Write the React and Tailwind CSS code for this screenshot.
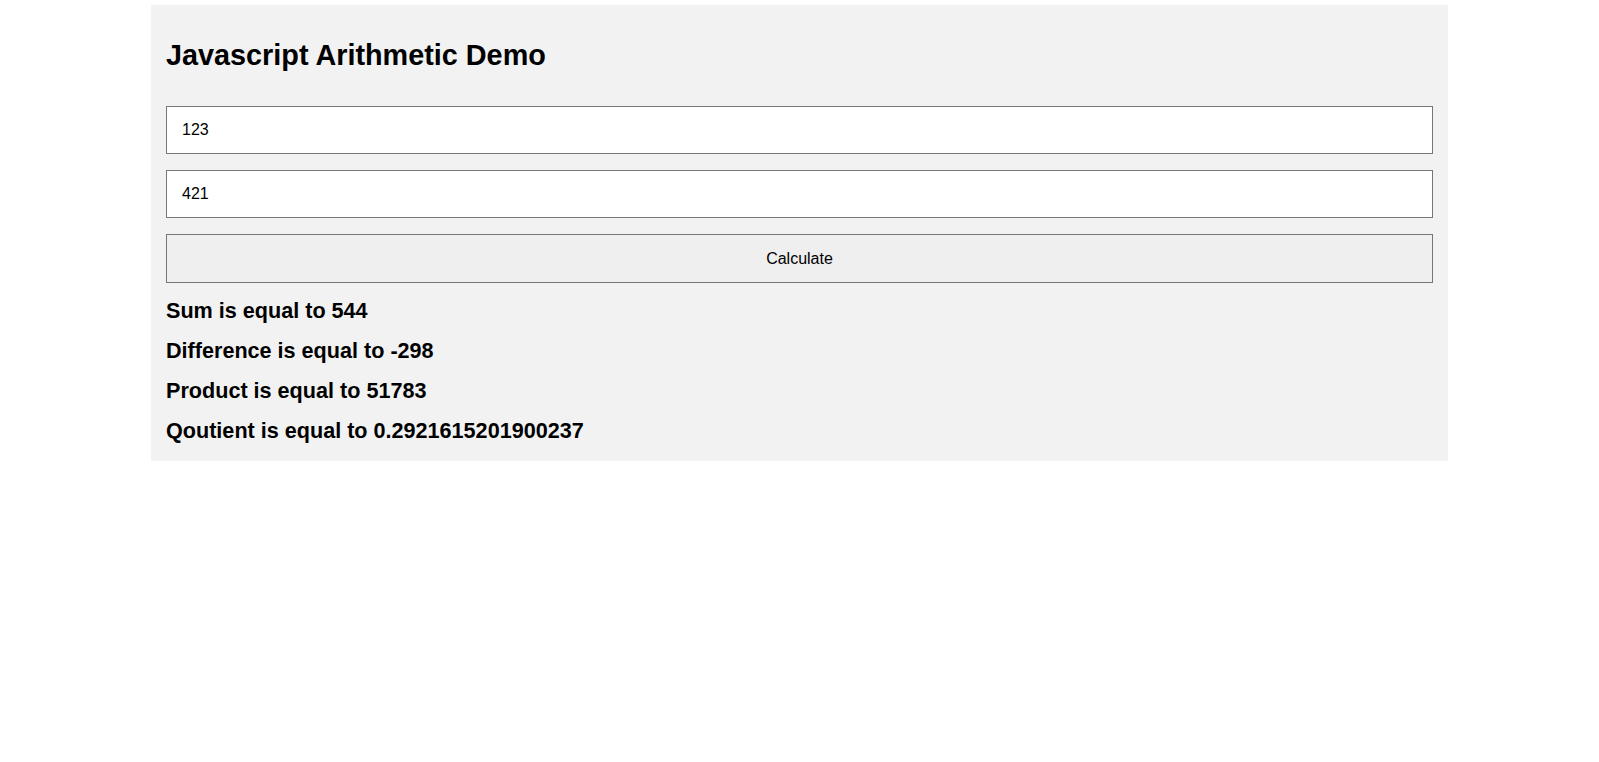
import React, { useState } from 'react';

const App = () => {
  const [a, setA] = useState('123');
  const [b, setB] = useState('421');
  const [res, setRes] = useState({ sum: 544, diff: -298, prod: 51783, quot: 0.2921615201900237 });

  const calculate = () => {
    const x = Number(a), y = Number(b);
    setRes({ sum: x + y, diff: x - y, prod: x * y, quot: x / y });
  };

  return (
    <div className="min-h-screen bg-white pt-[5px] font-['Liberation_Sans',Arial,sans-serif] text-black">
      <div className="w-[1297px] ml-[151px] bg-[#f2f2f2] px-[15px] pt-[34px] pb-[18px]">
        <h1 className="text-[28.8px] leading-[32px] font-bold">Javascript Arithmetic Demo</h1>

        <div className="mt-[35px] flex flex-col gap-[16px]">
          <input type="text" value={a} onChange={e => setA(e.target.value)} className="h-[48px] w-full bg-white border border-[#767676] px-[15px] text-[16px] outline-none" />
          <input type="text" value={b} onChange={e => setB(e.target.value)} className="h-[48px] w-full bg-white border border-[#767676] px-[15px] text-[16px] outline-none" />
          <button onClick={calculate} className="h-[49px] w-full bg-[#efefef] border border-[#767676] text-[16px]">Calculate</button>
        </div>

        <div className="mt-[16px] flex flex-col gap-[16px] text-[21.6px] leading-[24px] font-bold">
          <p>Sum is equal to {res.sum}</p>
          <p>Difference is equal to {res.diff}</p>
          <p>Product is equal to {res.prod}</p>
          <p>Qoutient is equal to {res.quot}</p>
        </div>
      </div>
    </div>
  );
};

export default App;
